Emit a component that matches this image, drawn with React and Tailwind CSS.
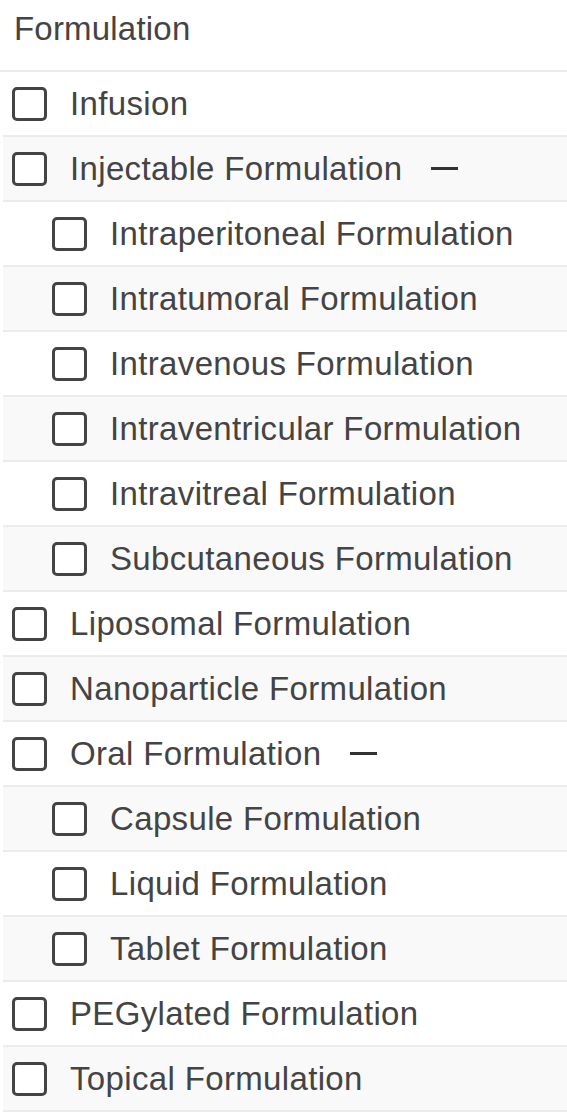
import React from 'react';

const items = [
  { label: 'Infusion', level: 0 },
  { label: 'Injectable Formulation', level: 0, open: true },
  { label: 'Intraperitoneal Formulation', level: 1 },
  { label: 'Intratumoral Formulation', level: 1 },
  { label: 'Intravenous Formulation', level: 1 },
  { label: 'Intraventricular Formulation', level: 1 },
  { label: 'Intravitreal Formulation', level: 1 },
  { label: 'Subcutaneous Formulation', level: 1 },
  { label: 'Liposomal Formulation', level: 0 },
  { label: 'Nanoparticle Formulation', level: 0 },
  { label: 'Oral Formulation', level: 0, open: true },
  { label: 'Capsule Formulation', level: 1 },
  { label: 'Liquid Formulation', level: 1 },
  { label: 'Tablet Formulation', level: 1 },
  { label: 'PEGylated Formulation', level: 0 },
  { label: 'Topical Formulation', level: 0 },
];

export default function App() {
  return (
    <div
      className="w-[567px] h-[1117px] bg-white text-[#444444]"
      style={{ fontFamily: '"Liberation Sans", Arial, sans-serif' }}
    >
      <div className="h-[72px] pl-[14px] pt-[9px] text-[33px] leading-[40px] tracking-[0.2px] border-b-2 border-[#ececec]">
        Formulation
      </div>
      <ul>
        {items.map((item, index) => (
          <li
            key={index}
            className={`ml-[3px] h-[65px] flex items-center border-b-2 border-[#ececec] ${
              index % 2 === 1 ? 'bg-[#f9f9f9]' : 'bg-white'
            } ${item.level === 1 ? 'pl-[49px]' : 'pl-[9px]'}`}
          >
            <span className="w-[35px] h-[34px] shrink-0 rounded-[5px] border-[3px] border-[#444444] bg-white"></span>
            <span className="ml-[23px] text-[33px] leading-none tracking-[0.35px]">{item.label}</span>
            {item.open && <span className="ml-[29px] w-[27px] h-[3px] bg-[#333333]"></span>}
          </li>
        ))}
      </ul>
    </div>
  );
}
